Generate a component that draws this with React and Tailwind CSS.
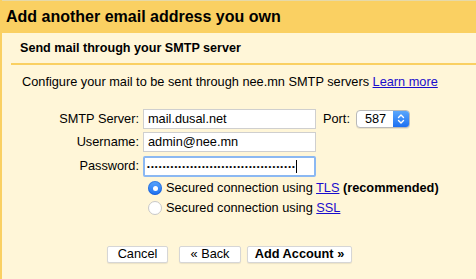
export default function App() {
  const font = { fontFamily: '"Liberation Sans", Arial, sans-serif' };
  return (
    <div style={font} className="w-[476px] h-[279px] overflow-hidden bg-[#fff6d8] border-l-2 border-[#fad062] text-black text-[12.75px]">
      <div className="h-[33px] bg-[#fad062] border-t border-[#e6d9a8] flex items-center pl-[4px]">
        <span className="text-[16px] font-bold leading-none">Add another email address you own</span>
      </div>
      <div className="h-[30px] flex items-center pl-[18px]">
        <span className="text-[12.6px] font-bold leading-none">Send mail through your SMTP server</span>
      </div>
      <div className="ml-[9px] h-[2px] bg-[#fad062]"></div>
      <div className="pl-[20px] pt-[11px] leading-none h-[35px]">
        Configure your mail to be sent through nee.mn SMTP servers{" "}
        <a className="text-[#1a0dcc] underline">Learn more</a>
      </div>
      <div className="flex flex-col gap-[3px] mt-[9px]">
        <div className="flex items-center h-[20px]">
          <label className="w-[139px] text-right pr-[2px] leading-none">SMTP Server:</label>
          <div className="ml-[2px] w-[173px] h-[20px] bg-white border border-[#cfcfcf] flex items-center px-[4px] leading-none">mail.dusal.net</div>
          <span className="ml-[7px] leading-none">Port:</span>
          <div className="ml-[6px] w-[54px] h-[18px] rounded-[4px] border border-[#b9b9b9] bg-white flex overflow-hidden shadow-[0_1px_0_rgba(0,0,0,0.08)]">
            <div className="flex-1 flex items-center pl-[8px] leading-none">587</div>
            <div className="w-[16px] bg-gradient-to-b from-[#5aa6fb] to-[#1c6ff2] flex items-center justify-center">
              <svg width="8" height="12" viewBox="0 0 8 12" fill="none" stroke="white" strokeWidth="1.4" strokeLinecap="round" strokeLinejoin="round">
                <path d="M1.5 4.5 L4 2 L6.5 4.5" />
                <path d="M1.5 7.5 L4 10 L6.5 7.5" />
              </svg>
            </div>
          </div>
        </div>
        <div className="flex items-center h-[20px]">
          <label className="w-[139px] text-right pr-[2px] leading-none">Username:</label>
          <div className="ml-[2px] w-[173px] h-[20px] bg-white border border-[#cfcfcf] flex items-center px-[4px] leading-none">admin@nee.mn</div>
        </div>
        <div className="flex items-center h-[21px] mt-[1px]">
          <label className="w-[139px] text-right pr-[2px] leading-none">Password:</label>
          <div className="ml-[2px] w-[173px] h-[21px] bg-white border-2 border-[#8bb8f2] rounded-[2px] flex items-center px-[2px] leading-none overflow-hidden">
            <span className="text-[8px] tracking-[1.12px] whitespace-nowrap">{"•".repeat(38)}</span>
            <span className="w-px h-[13px] bg-black"></span>
          </div>
        </div>
      </div>
      <div className="mt-[1px] ml-[146px] flex flex-col">
        <div className="flex items-center h-[20px]">
          <span className="w-[14px] h-[14px] rounded-full bg-gradient-to-b from-[#5aa6fb] to-[#1c6ff2] flex items-center justify-center shadow-[inset_0_0_0_1px_rgba(0,60,180,0.35)]">
            <span className="w-[5px] h-[5px] rounded-full bg-white"></span>
          </span>
          <span className="ml-[4px] leading-none">
            Secured connection using <a className="text-[#1a0dcc] underline">TLS</a> <b>(recommended)</b>
          </span>
        </div>
        <div className="flex items-center h-[20px]">
          <span className="w-[14px] h-[14px] rounded-full bg-white border border-[#c8c8c8]"></span>
          <span className="ml-[4px] leading-none">
            Secured connection using <a className="text-[#1a0dcc] underline">SSL</a>
          </span>
        </div>
      </div>
      <div className="flex mt-[28px] ml-[105px] gap-[12px]">
        <button style={font} className="w-[61px] h-[17px] bg-white border border-[#d6d6d6] rounded-[2px] text-[12.75px] leading-none flex items-center justify-center shadow-[0_1px_1px_rgba(0,0,0,0.08)]">Cancel</button>
        <button style={font} className="w-[62px] h-[17px] bg-white border border-[#d6d6d6] rounded-[2px] text-[12.75px] leading-none flex items-center justify-center shadow-[0_1px_1px_rgba(0,0,0,0.08)] -ml-[1px]">« Back</button>
        <button style={font} className="w-[105px] h-[17px] bg-white border border-[#d6d6d6] rounded-[2px] text-[12.75px] font-bold leading-none flex items-center justify-center shadow-[0_1px_1px_rgba(0,0,0,0.08)] -ml-[6px]">Add Account »</button>
      </div>
    </div>
  );
}
